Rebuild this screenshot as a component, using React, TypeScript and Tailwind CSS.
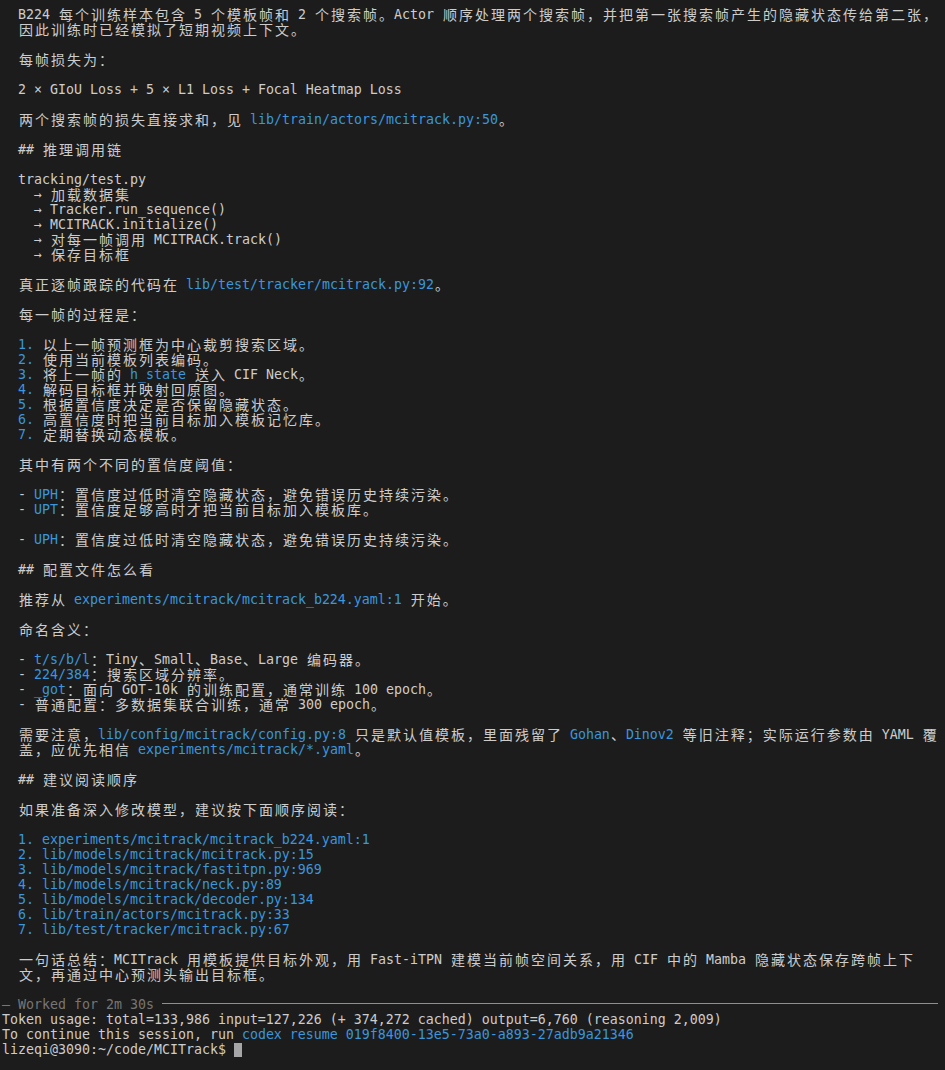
import { Fragment } from 'react';

type Seg = string | { t: string; cyan?: boolean; dim?: boolean };

const c = (t: string): Seg => ({ t, cyan: true });

// CJK ideographs and full-width punctuation take two terminal cells
const WIDE = /[\u2e80-\u9fff\u3000-\u303f\uff00-\uffef]/;

const Cells = ({ s }: { s: string }) => {
  const out: React.ReactNode[] = [];
  let buf = '';
  Array.from(s).forEach((ch, i) => {
    if (WIDE.test(ch)) {
      if (buf) {
        out.push(<Fragment key={`b${i}`}>{buf}</Fragment>);
        buf = '';
      }
      out.push(
        <span
          key={i}
          className="inline-block w-[16px] text-center font-['Noto_Sans_CJK_SC',sans-serif] text-[14px] leading-[15px] align-top"
        >
          {ch}
        </span>
      );
    } else {
      buf += ch;
    }
  });
  if (buf) out.push(<Fragment key="end">{buf}</Fragment>);
  return <>{out}</>;
};

const Row = ({ segs }: { segs: Seg[] }) => (
  <div className="h-[15px] leading-[15px] whitespace-pre">
    {segs.map((seg, i) =>
      typeof seg === 'string' ? (
        <Cells key={i} s={seg} />
      ) : (
        <span key={i} className={seg.cyan ? 'text-[#3a96dd]' : 'text-[#767676]'}>
          <Cells s={seg.t} />
        </span>
      )
    )}
  </div>
);

const body: Seg[][] = [
  ['B224 每个训练样本包含 5 个模板帧和 2 个搜索帧。Actor 顺序处理两个搜索帧，并把第一张搜索帧产生的隐藏状态传给第二张，'],
  ['因此训练时已经模拟了短期视频上下文。'],
  [],
  ['每帧损失为：'],
  [],
  ['2 × GIoU Loss + 5 × L1 Loss + Focal Heatmap Loss'],
  [],
  ['两个搜索帧的损失直接求和，见 ', c('lib/train/actors/mcitrack.py:50'), '。'],
  [],
  ['## 推理调用链'],
  [],
  ['tracking/test.py'],
  ['  → 加载数据集'],
  ['  → Tracker.run_sequence()'],
  ['  → MCITRACK.initialize()'],
  ['  → 对每一帧调用 MCITRACK.track()'],
  ['  → 保存目标框'],
  [],
  ['真正逐帧跟踪的代码在 ', c('lib/test/tracker/mcitrack.py:92'), '。'],
  [],
  ['每一帧的过程是：'],
  [],
  [c('1. '), '以上一帧预测框为中心裁剪搜索区域。'],
  [c('2. '), '使用当前模板列表编码。'],
  [c('3. '), '将上一帧的 ', c('h_state'), ' 送入 CIF Neck。'],
  [c('4. '), '解码目标框并映射回原图。'],
  [c('5. '), '根据置信度决定是否保留隐藏状态。'],
  [c('6. '), '高置信度时把当前目标加入模板记忆库。'],
  [c('7. '), '定期替换动态模板。'],
  [],
  ['其中有两个不同的置信度阈值：'],
  [],
  ['- ', c('UPH'), '：置信度过低时清空隐藏状态，避免错误历史持续污染。'],
  ['- ', c('UPT'), '：置信度足够高时才把当前目标加入模板库。'],
  [],
  ['- ', c('UPH'), '：置信度过低时清空隐藏状态，避免错误历史持续污染。'],
  [],
  ['## 配置文件怎么看'],
  [],
  ['推荐从 ', c('experiments/mcitrack/mcitrack_b224.yaml:1'), ' 开始。'],
  [],
  ['命名含义：'],
  [],
  ['- ', c('t/s/b/l'), '：Tiny、Small、Base、Large 编码器。'],
  ['- ', c('224/384'), '：搜索区域分辨率。'],
  ['- ', c('_got'), '：面向 GOT-10k 的训练配置，通常训练 100 epoch。'],
  ['- 普通配置：多数据集联合训练，通常 300 epoch。'],
  [],
  [
    '需要注意，',
    c('lib/config/mcitrack/config.py:8'),
    ' 只是默认值模板，里面残留了 ',
    c('Gohan'),
    '、',
    c('Dinov2'),
    ' 等旧注释；实际运行参数由 YAML 覆',
  ],
  ['盖，应优先相信 ', c('experiments/mcitrack/*.yaml'), '。'],
  [],
  ['## 建议阅读顺序'],
  [],
  ['如果准备深入修改模型，建议按下面顺序阅读：'],
  [],
  [c('1. experiments/mcitrack/mcitrack_b224.yaml:1')],
  [c('2. lib/models/mcitrack/mcitrack.py:15')],
  [c('3. lib/models/mcitrack/fastitpn.py:969')],
  [c('4. lib/models/mcitrack/neck.py:89')],
  [c('5. lib/models/mcitrack/decoder.py:134')],
  [c('6. lib/train/actors/mcitrack.py:33')],
  [c('7. lib/test/tracker/mcitrack.py:67')],
  [],
  ['一句话总结：MCITrack 用模板提供目标外观，用 Fast-iTPN 建模当前帧空间关系，用 CIF 中的 Mamba 隐藏状态保存跨帧上下'],
  ['文，再通过中心预测头输出目标框。'],
  [],
];

export default function App() {
  return (
    <div className="min-h-screen bg-[#1c1c1c] text-[#cccccc] font-['DejaVu_Sans_Mono',monospace] text-[13.29px] pt-[7px] pl-[2px] antialiased">
      {/* assistant answer, indented two cells */}
      <div className="pl-[16px]">
        {body.map((segs, i) => (
          <Row key={i} segs={segs} />
        ))}
      </div>

      {/* session footer */}
      <div className="h-[15px] leading-[15px] whitespace-pre flex items-center pr-[7px]">
        <span className="text-[#767676]">— Worked for 2m 30s </span>
        <div className="flex-1 h-px bg-[#8f8f8f] -translate-y-[1px]" />
      </div>
      <Row segs={['Token usage: total=133,986 input=127,226 (+ 374,272 cached) output=6,760 (reasoning 2,009)']} />
      <Row segs={['To continue this session, run ', c('codex resume 019f8400-13e5-73a0-a893-27adb9a21346')]} />
      <div className="h-[15px] leading-[15px] whitespace-pre">
        lizeqi@3090:~/code/MCITrack$ <span className="inline-block align-top mt-[1px] w-[8px] h-[14px] bg-[#a6a6a6]" />
      </div>
    </div>
  );
}
